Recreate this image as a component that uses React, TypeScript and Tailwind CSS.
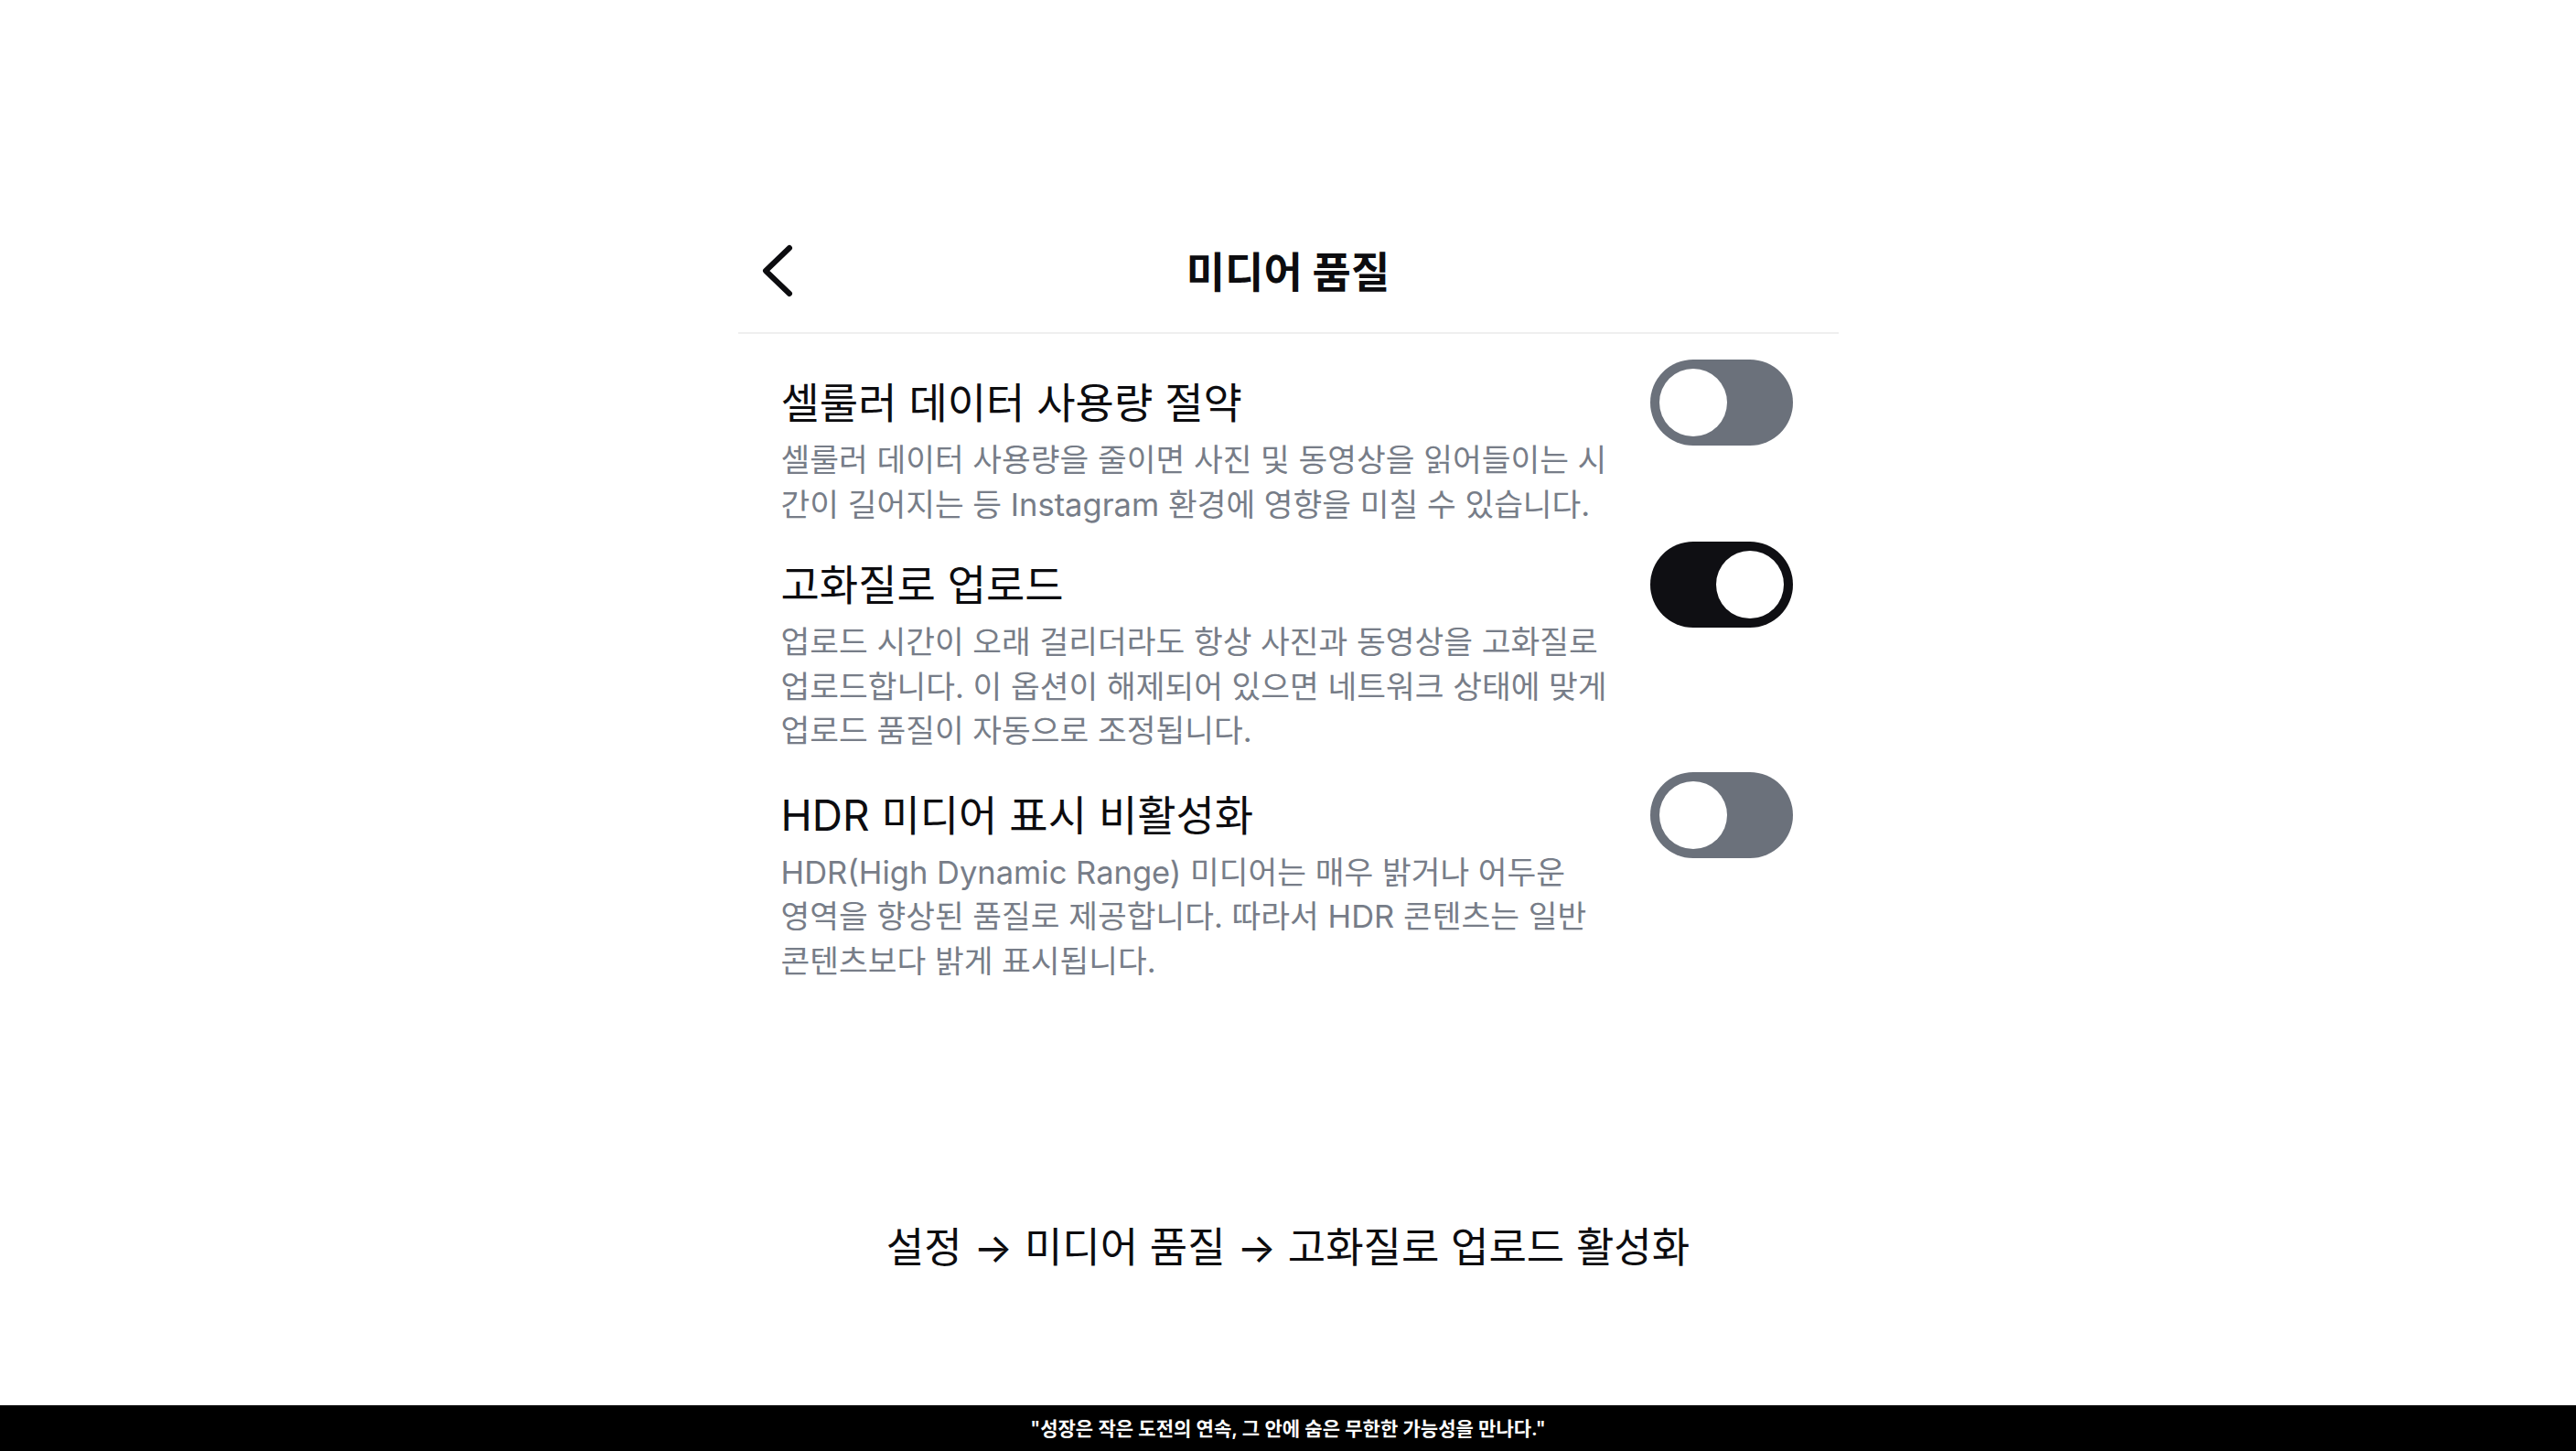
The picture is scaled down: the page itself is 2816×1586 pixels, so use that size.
import React from "react";

const FONT = { fontFamily: '"Inter", "Noto Sans CJK KR", sans-serif' };

function Toggle({ on }: { on: boolean }) {
  return (
    <div
      className={
        "shrink-0 w-[156px] h-[94px] rounded-full flex items-center px-[10px] " +
        (on ? "bg-[#0f0f13] justify-end" : "bg-[#6b717b] justify-start")
      }
    >
      <div className="w-[74px] h-[74px] rounded-full bg-white" />
    </div>
  );
}

function Row({
  title,
  lines,
  on,
  className,
}: {
  title: string;
  lines: string[];
  on: boolean;
  className?: string;
}) {
  return (
    <div className={"flex items-start justify-between pl-[47px] pr-[50px] " + (className ?? "")}>
      <div className="pt-[19px] flex flex-col">
        <div className="text-[46px] leading-[56px] text-[#0c0c0f] whitespace-nowrap mb-[11px]">{title}</div>
        {lines.map((l, i) => (
          <div key={i} className="text-[34.5px] leading-[48.5px] text-[#777d88] whitespace-nowrap">
            {l}
          </div>
        ))}
      </div>
      <Toggle on={on} />
    </div>
  );
}

export default function App() {
  return (
    <div className="w-full h-[1586px] bg-white flex flex-col overflow-hidden" style={FONT}>
      <div className="flex-1 flex flex-col items-center pt-[229px]">
        <div className="w-[1203px] flex flex-col">
          <div className="h-[136px] border-b-2 border-[#efefef] grid grid-cols-[1fr_auto_1fr] items-center">
            <div className="pl-[22px] flex items-center">
              <svg width="40" height="60" viewBox="0 0 40 60" fill="none">
                <path
                  d="M34 5 L8 30 L34 55"
                  stroke="#0c0c0f"
                  strokeWidth="6"
                  strokeLinecap="round"
                  strokeLinejoin="round"
                />
              </svg>
            </div>
            <div className="text-[46px] font-bold text-[#0c0c0f] leading-none pt-[2px]">미디어 품질</div>
            <div />
          </div>

          <Row
            className="mt-[28px]"
            title="셀룰러 데이터 사용량 절약"
            lines={[
              "셀룰러 데이터 사용량을 줄이면 사진 및 동영상을 읽어들이는 시",
              "간이 길어지는 등 Instagram 환경에 영향을 미칠 수 있습니다.",
            ]}
            on={false}
          />
          <Row
            className="mt-[16px]"
            title="고화질로 업로드"
            lines={[
              "업로드 시간이 오래 걸리더라도 항상 사진과 동영상을 고화질로",
              "업로드합니다. 이 옵션이 해제되어 있으면 네트워크 상태에 맞게",
              "업로드 품질이 자동으로 조정됩니다.",
            ]}
            on={true}
          />
          <Row
            className="mt-[20px]"
            title="HDR 미디어 표시 비활성화"
            lines={[
              "HDR(High Dynamic Range) 미디어는 매우 밝거나 어두운",
              "영역을 향상된 품질로 제공합니다. 따라서 HDR 콘텐츠는 일반",
              "콘텐츠보다 밝게 표시됩니다.",
            ]}
            on={false}
          />
        </div>
        <div className="mt-[259px] text-[45px] leading-[60px] text-[#0c0c0f] whitespace-nowrap">
          설정 → 미디어 품질 → 고화질로 업로드 활성화
        </div>
      </div>
      <div className="h-[50px] bg-black flex items-center justify-center">
        <div className="text-white text-[21px] font-semibold leading-none">
          "성장은 작은 도전의 연속, 그 안에 숨은 무한한 가능성을 만나다."
        </div>
      </div>
    </div>
  );
}
